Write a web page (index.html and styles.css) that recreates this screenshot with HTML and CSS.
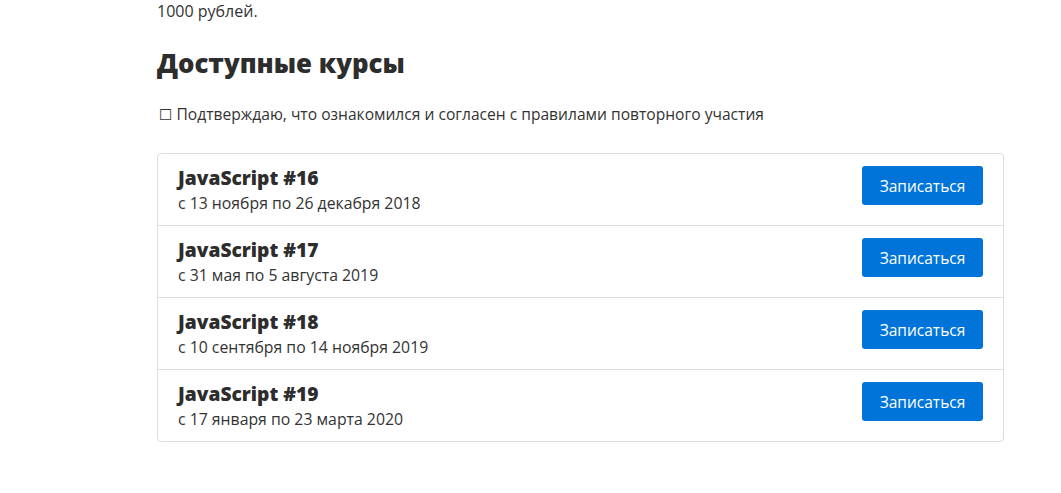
FILE: index.html
```html
<!DOCTYPE html>
<html lang="ru">
<head>
<meta charset="utf-8">
<link rel="stylesheet" href="styles.css">
</head>
<body>
<div class="page">
  <p class="lead">1000 рублей.</p>
  <h2 class="heading">Доступные курсы</h2>
  <label class="agree"><span class="box">☐</span> Подтверждаю, что ознакомился и согласен с правилами повторного участия</label>
  <div class="list">
    <div class="row">
      <div class="info">
        <div class="title">JavaScript #16</div>
        <div class="dates">с 13 ноября по 26 декабря 2018</div>
      </div>
      <button class="btn">Записаться</button>
    </div>
    <div class="row">
      <div class="info">
        <div class="title">JavaScript #17</div>
        <div class="dates">с 31 мая по 5 августа 2019</div>
      </div>
      <button class="btn">Записаться</button>
    </div>
    <div class="row">
      <div class="info">
        <div class="title">JavaScript #18</div>
        <div class="dates">с 10 сентября по 14 ноября 2019</div>
      </div>
      <button class="btn">Записаться</button>
    </div>
    <div class="row">
      <div class="info">
        <div class="title">JavaScript #19</div>
        <div class="dates">с 17 января по 23 марта 2020</div>
      </div>
      <button class="btn">Записаться</button>
    </div>
  </div>
</div>
</body>
</html>
```
FILE: styles.css
```css
html, body {
  margin: 0;
  padding: 0;
  background: #fff;
}
body {
  font-family: "Open Sans", "Noto Sans", sans-serif;
  color: #333;
}
.page {
  width: 847px;
  margin-left: 157px;
}
.lead {
  margin: 0;
  font-size: 16px;
  line-height: 22px;
}
.heading {
  margin: 24px 0 0;
  font-size: 25.8px;
  line-height: 34px;
  font-weight: 800;
  color: #2d2d2d;
}
.agree {
  display: block;
  margin-top: 23px;
  font-size: 15.6px;
  line-height: 22px;
}
.box {
  font-family: "DejaVu Sans", sans-serif;
  font-size: 15px;
  margin-left: 2px;
}
.list {
  margin-top: 27px;
  border: 1px solid #ddd;
  border-radius: 4px;
}
.row {
  display: flex;
  justify-content: space-between;
  align-items: flex-start;
  height: 72px;
  padding: 0 20px;
  border-top: 1px solid #ddd;
  box-sizing: border-box;
}
.row:first-child {
  border-top: none;
  height: 71px;
}
.info {
  padding-top: 11px;
}
.title {
  font-size: 19.2px;
  line-height: 25px;
  font-weight: 800;
  color: #2d2d2d;
}
.dates {
  margin-top: 2px;
  font-size: 15.8px;
  line-height: 22px;
}
.btn {
  margin-top: 12px;
  width: 121px;
  height: 39px;
  border: none;
  border-radius: 3px;
  background: #0074d9;
  color: #fff;
  font-family: "Open Sans", "Noto Sans", sans-serif;
  font-size: 15.5px;
  cursor: pointer;
}
```
